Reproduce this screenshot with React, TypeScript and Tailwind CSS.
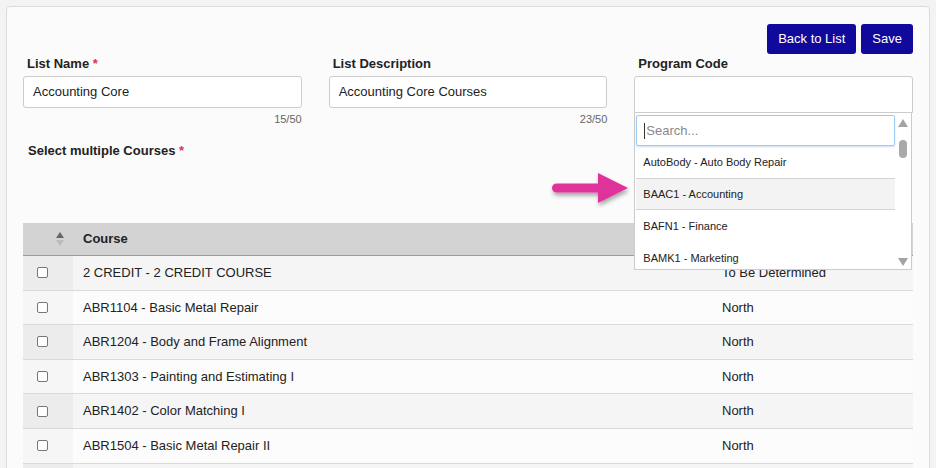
import React from "react";

const courses = [
  { name: "2 CREDIT - 2 CREDIT COURSE", campus: "To Be Determined" },
  { name: "ABR1104 - Basic Metal Repair", campus: "North" },
  { name: "ABR1204 - Body and Frame Alignment", campus: "North" },
  { name: "ABR1303 - Painting and Estimating I", campus: "North" },
  { name: "ABR1402 - Color Matching I", campus: "North" },
  { name: "ABR1504 - Basic Metal Repair II", campus: "North" },
  { name: "ABR1604 - Painting and Estimating II", campus: "North" },
];

const programs = [
  "AutoBody - Auto Body Repair",
  "BAAC1 - Accounting",
  "BAFN1 - Finance",
  "BAMK1 - Marketing",
];

function Field({ label, value, count, required }: { label: string; value: string; count: string; required?: boolean }) {
  return (
    <div>
      <div className="h-[16px] pl-[4px] text-[13px] font-bold leading-[16px] text-[#222]">
        {label}
        {required ? <span className="text-[#d9345a]"> *</span> : null}
      </div>
      <div className="mt-[4px] flex h-[32px] items-center rounded-[3px] border border-[#ccc] bg-white px-[9px] text-[13px] text-[#222]">
        {value}
      </div>
      <div className="mt-[4px] text-right text-[11px] leading-[14px] text-[#666]">{count}</div>
    </div>
  );
}

function ProgramPicker() {
  return (
    <div className="relative">
      <div className="h-[16px] pl-[4px] text-[13px] font-bold leading-[16px] text-[#222]">Program Code</div>
      <div className="mt-[4px] h-[37px] rounded-t-[3px] border border-[#ccc] bg-white" />
      <div className="absolute left-0 right-[1px] top-[57px] z-10 flex h-[157px] border border-t-0 border-[#ccc] bg-white">
        <div className="flex-1 pl-[1px] pt-[2px]">
          <div className="flex h-[31px] items-center rounded-[2px] border border-[#9ecbf3] px-[7px] text-[13px] text-[#888] shadow-[0_1px_2px_rgba(120,170,230,0.4)]">
            <span className="mr-[1px] h-[16px] w-px bg-[#333]" />
            Search...
          </div>
          <div className="text-[11px] text-[#222]">
            {programs.map((p, i) => (
              <div
                key={p}
                className={
                  i === 1
                    ? "flex h-[32px] items-center border-y border-[#d4d4d4] bg-[#f3f3f3] pl-[7px]"
                    : "flex h-[32px] items-center pl-[7px]"
                }
              >
                {p}
              </div>
            ))}
          </div>
        </div>
        <div className="relative w-[16px]">
          <svg className="absolute left-[3px] top-[6px]" width="10" height="8" viewBox="0 0 10 8">
            <path d="M5 0 L10 8 L0 8 Z" fill="#a3a3a3" />
          </svg>
          <div className="absolute left-[4px] top-[27px] h-[18px] w-[8px] rounded-[4px] bg-[#a9a9a9]" />
          <svg className="absolute bottom-[3px] left-[3px]" width="10" height="8" viewBox="0 0 10 8">
            <path d="M0 0 L10 0 L5 8 Z" fill="#a3a3a3" />
          </svg>
        </div>
      </div>
    </div>
  );
}

export default function App() {
  return (
    <div className="h-[468px] overflow-hidden bg-[#f3f3f3] pl-[6px] pr-[6px] pt-[6px] font-['Liberation_Sans',Arial,sans-serif]">
      <div className="relative h-[520px] rounded-[4px] border border-[#dcdcdc] bg-[#fbfbfb] px-[16px] pt-[17px]">
        <div className="flex justify-end gap-[5px]">
          <button className="h-[30px] rounded-[3px] bg-[#11099b] px-[11px] text-[13px] text-white">Back to List</button>
          <button className="h-[30px] rounded-[3px] bg-[#11099b] px-[11px] text-[13px] text-white">Save</button>
        </div>

        <div className="mt-[2px] grid grid-cols-3 gap-[27px]">
          <Field label="List Name" value="Accounting Core" count="15/50" required />
          <Field label="List Description" value="Accounting Core Courses" count="23/50" />
          <ProgramPicker />
        </div>

        <div className="mt-[17px] pl-[5px] text-[13px] font-bold leading-[16px] text-[#222]">
          Select multiple Courses<span className="text-[#d9345a]"> *</span>
        </div>

        <div className="mt-[64px] text-[13px] text-[#222]">
          <div className="flex h-[33px] items-center border-b border-[#9a9a9a] bg-[#d3d3d3]">
            <div className="flex h-full w-[50px] items-center justify-end pr-[9px]">
              <svg width="8" height="14" viewBox="0 0 8 14">
                <path d="M4 0 L8 6 L0 6 Z" fill="#666" />
                <path d="M0 8 L8 8 L4 14 Z" fill="#bbb" />
              </svg>
            </div>
            <div className="pl-[10px] font-bold">Course</div>
          </div>
          {courses.map((c, i) => (
            <div
              key={c.name}
              className={
                i % 2 === 0
                  ? "flex h-[34.6px] items-center border-b border-[#dadada] bg-[#f5f5f5]"
                  : "flex h-[34.6px] items-center border-b border-[#dadada] bg-[#fcfcfc]"
              }
            >
              <div
                className={
                  i % 2 === 0
                    ? "flex h-full w-[50px] items-center justify-center bg-[#ececec] pr-[12px]"
                    : "flex h-full w-[50px] items-center justify-center bg-[#f6f6f6] pr-[12px]"
                }
              >
                <span className="h-[11px] w-[11px] rounded-[2px] border border-[#777] bg-white" />
              </div>
              <div className="w-[649px] pl-[10px]">{c.name}</div>
              <div>{c.campus}</div>
            </div>
          ))}
        </div>

        <svg className="absolute left-[533px] top-[161px]" width="90" height="48" viewBox="0 0 90 48">
          <defs>
            <filter id="sh" x="-20%" y="-20%" width="140%" height="160%">
              <feDropShadow dx="1" dy="3" stdDeviation="2" floodColor="#000" floodOpacity="0.35" />
            </filter>
          </defs>
          <path
            d="M16.5 15.5 L58 15.5 L58 5 L88 20 L58 35 L58 24.5 L16.5 24.5 A4.5 4.5 0 0 1 16.5 15.5 Z"
            fill="#e0309b"
            filter="url(#sh)"
          />
        </svg>
      </div>
    </div>
  );
}
